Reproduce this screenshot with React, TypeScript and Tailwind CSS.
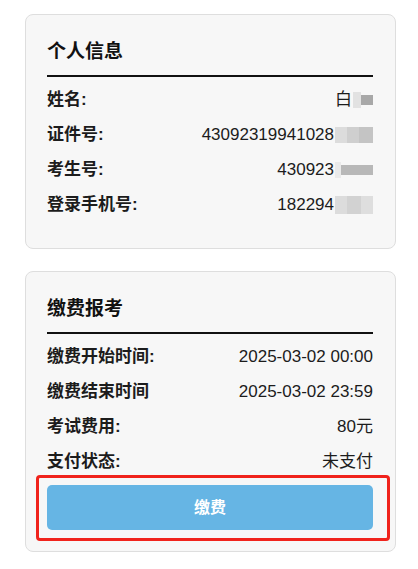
const font = { fontFamily: '"Liberation Sans", Arial, "Noto Sans CJK SC", sans-serif' };

function Blur({ widths }: { widths: string[] }) {
  return (
    <span className="ml-[1px] inline-flex h-[16px] items-center">
      {widths.map((c, i) => (
        <span key={i} className={c} />
      ))}
    </span>
  );
}

function Row({ label, value }: { label: string; value: React.ReactNode }) {
  return (
    <div className="flex h-[35px] items-center justify-between text-[17px] text-[#1c1c1c]">
      <span className="font-bold">{label}</span>
      <span className="flex items-center">{value}</span>
    </div>
  );
}

function Card({ title, children, bottom = 'pb-[26px]' }: { title: string; children: React.ReactNode; bottom?: string }) {
  return (
    <div className={`rounded-[8px] border border-[#dedede] bg-[#f7f7f7] pl-[21px] pr-[22px] pt-[26px] ${bottom}`}>
      <h2 className="text-[19px] font-bold leading-[22px] text-[#111]">{title}</h2>
      <div className="mt-[12px] h-[2px] bg-[#111]" />
      {children}
    </div>
  );
}

export default function App() {
  return (
    <div className="min-h-[569px] bg-white pl-[25px] pr-[22px] pt-[14px]" style={font}>
      <Card title="个人信息">
        <div className="pt-[5px]">
          <Row
            label="姓名:"
            value={
              <>
                白
                <Blur widths={['h-[16px] w-[8px] bg-[#e2e2e2]', 'h-[10px] w-[12px] bg-[#a8a8a8]']} />
              </>
            }
          />
          <Row
            label="证件号:"
            value={
              <>
                43092319941028
                <Blur widths={['h-[16px] w-[12px] bg-[#dcdcdc]', 'h-[16px] w-[12px] bg-[#cfcfcf]', 'h-[16px] w-[14px] bg-[#c4c4c4]']} />
              </>
            }
          />
          <Row
            label="考生号:"
            value={
              <>
                430923
                <Blur widths={['h-[16px] w-[6px] bg-[#eaeaea]', 'h-[10px] w-[32px] bg-[#b8b8b8]']} />
              </>
            }
          />
          <Row
            label="登录手机号:"
            value={
              <>
                182294
                <Blur widths={['h-[18px] w-[12px] bg-[#dcdcdc]', 'h-[18px] w-[14px] bg-[#d2d2d2]', 'h-[18px] w-[12px] bg-[#dedede]']} />
              </>
            }
          />
        </div>
      </Card>

      <div className="mt-[22px]">
        <Card title="缴费报考" bottom="pb-[21px]">
          <div className="pt-[5px]">
            <Row label="缴费开始时间:" value="2025-03-02 00:00" />
            <Row label="缴费结束时间" value="2025-03-02 23:59" />
            <Row label="考试费用:" value="80元" />
            <Row label="支付状态:" value="未支付" />
          </div>
          <div className="relative mt-[6px]">
            <div className="absolute -bottom-[11px] -left-[11px] -right-[17px] -top-[10px] rounded-[4px] border-[3px] border-[#f0231c]" />
            <button className="flex h-[45px] w-full items-center justify-center rounded-[5px] bg-[#66b5e4] text-[16px] font-bold text-white">
              缴费
            </button>
          </div>
        </Card>
      </div>
    </div>
  );
}
